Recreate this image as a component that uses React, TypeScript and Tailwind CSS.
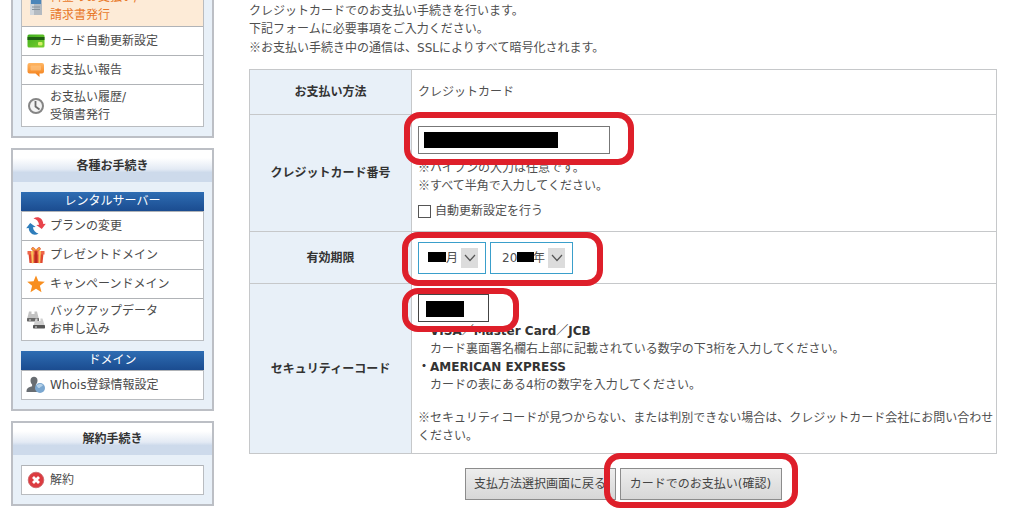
import type { ReactNode } from 'react'

interface MenuItem {
  icon: ReactNode
  lines: string[]
  active?: boolean
}

const ServerIcon = () => (
  <svg viewBox="0 0 18 18" className="h-[18px] w-[18px]">
    <rect x="3" y="0" width="12" height="18" fill="#b3bac1" />
    <rect x="3" y="0" width="4" height="18" fill="#d2d7dc" />
    <rect x="4" y="0" width="10" height="7" fill="#4d86b9" />
    <path d="M5 10h8M5 12.500h8" stroke="#8a939c" strokeWidth="1" />
  </svg>
)

const CardIcon = () => (
  <svg viewBox="0 0 18 18" className="h-[18px] w-[18px]">
    <defs>
      <linearGradient id="card" x1="0" y1="0" x2="1" y2="1">
        <stop offset="0" stopColor="#3fae1f" />
        <stop offset="1" stopColor="#7ad02c" />
      </linearGradient>
    </defs>
    <rect x="0.500" y="2.500" width="17" height="13" rx="1.500" fill="url(#card)" />
    <rect x="0.500" y="5" width="17" height="3" fill="#1e5e12" />
    <rect x="11" y="10" width="4.500" height="3.500" rx="1" fill="#d6f06a" />
  </svg>
)

const BalloonIcon = () => (
  <svg viewBox="0 0 18 18" className="h-[18px] w-[18px]">
    <defs>
      <linearGradient id="balloon" x1="0" y1="0" x2="0" y2="1">
        <stop offset="0" stopColor="#ffb765" />
        <stop offset="1" stopColor="#f27a12" />
      </linearGradient>
    </defs>
    <path d="M2.500 2h12.500a2 2 0 0 1 2 2v6.500a2 2 0 0 1-2 2h-2.500v3.500l-4-3.500h-6a2 2 0 0 1-2-2v-6.500a2 2 0 0 1 2-2z" fill="url(#balloon)" />
    <rect x="3.500" y="4.500" width="10.500" height="5" rx="1" fill="#ffc98b" opacity="0.6" />
  </svg>
)

const ClockIcon = () => (
  <svg viewBox="0 0 18 18" className="h-[18px] w-[18px]">
    <circle cx="9" cy="9" r="7" fill="#f3f3f3" stroke="#858585" strokeWidth="2" />
    <path d="M8.500 4v5.500l4 3" fill="none" stroke="#6b6b6b" strokeWidth="1.800" />
  </svg>
)

const RefreshIcon = () => (
  <svg viewBox="0 0 20 20" className="h-5 w-5">
    <path d="M7.500 2.500C12-.5 17 2.500 17.300 8l2.500-.3-4 5.300-5.500-3.900 2.800-.4C12.700 5.500 10.500 3 7.500 2.500z" fill="#e8444c" />
    <path d="M12.500 17.500C8 20.500 3 17.500 2.700 12l-2.500.3 4-5.300 5.500 3.900-2.800.4c.4 3.200 2.600 5.700 5.600 6.200z" fill="#2e7dbb" />
  </svg>
)

const GiftIcon = () => (
  <svg viewBox="0 0 18 18" className="h-[18px] w-[18px]">
    <path d="M1.500 7.500h15l-1 9.500h-13z" fill="#e04732" />
    <rect x="0.500" y="5" width="17" height="3.500" fill="#ee6549" />
    <path d="M4 5h2.500v12.200H4.800zM11.500 5H14l-.8 12.200h-1.700z" fill="#f9c35a" />
    <rect x="7.700" y="5" width="2.500" height="12" fill="#b92b23" />
    <path d="M9 5C6 5.200 3.500 3.500 5 1.800 6.500.6 8.500 3 9 5zm0 0c3 .2 5.500-1.500 4-3.200C11.500.6 9.500 3 9 5z" fill="#f6a339" stroke="#d9482e" strokeWidth="0.700" />
  </svg>
)

const StarIcon = () => (
  <svg viewBox="0 0 18 18" className="h-[18px] w-[18px]">
    <path d="M9 .5l2.400 5.700 6.400.5-4.900 4.100 1.600 6.400L9 13.800l-5.500 3.400 1.600-6.400L.2 6.700l6.400-.5z" fill="#f88e1e" />
  </svg>
)

const BackupIcon = () => (
  <svg viewBox="0 0 20 20" className="h-5 w-5">
    <path d="M3 1.500h2.500v2.500h3V1.500H11l2 8H1z" fill="#c3c3c3" />
    <rect x="1" y="8" width="12" height="3.500" rx="0.700" fill="#686868" />
    <path d="M9.500 8.500h2v2.500h3V8.500h2l2.300 7.500H7.500z" fill="#d0d0d0" />
    <rect x="7" y="15" width="12" height="3.500" rx="0.700" fill="#555" />
    <path d="M3 10h2M9 17h2" stroke="#ddd" />
  </svg>
)

const UserIcon = () => (
  <svg viewBox="0 0 20 18" className="h-[18px] w-5">
    <path d="M4.500 4.500C4.500 2 6 .8 8 .8s3.500 1.200 3.500 3.700c0 2-.8 3.200-1.600 4v1.700l4.600 2V16H.5c0-3.500.8-4.200 5.600-5.800V8.500c-.8-.8-1.600-2-1.600-4z" fill="#686d72" />
    <circle cx="14" cy="12" r="5" fill="#7ba7d0" />
    <path d="M10.500 9.500c2-2 5-2 6.500-.5-1 2-2 1-3 2.500s-2.500 0-3.500-2z" fill="#b5d1e8" />
  </svg>
)

const CancelIcon = () => (
  <svg viewBox="0 0 18 18" className="h-[18px] w-[18px]">
    <circle cx="9" cy="9" r="7.800" fill="#dc3b40" stroke="#c9666a" strokeWidth="0.800" />
    <path d="M6 6l6 6M12 6l-6 6" stroke="#fff" strokeWidth="2.800" />
  </svg>
)

const paymentItems: MenuItem[] = [
  { icon: <ServerIcon />, lines: ['料金のお支払い/', '請求書発行'], active: true },
  { icon: <CardIcon />, lines: ['カード自動更新設定'] },
  { icon: <BalloonIcon />, lines: ['お支払い報告'] },
  { icon: <ClockIcon />, lines: ['お支払い履歴/', '受領書発行'] },
]

const serverItems: MenuItem[] = [
  { icon: <RefreshIcon />, lines: ['プランの変更'] },
  { icon: <GiftIcon />, lines: ['プレゼントドメイン'] },
  { icon: <StarIcon />, lines: ['キャンペーンドメイン'] },
  { icon: <BackupIcon />, lines: ['バックアップデータ', 'お申し込み'] },
]

const domainItems: MenuItem[] = [{ icon: <UserIcon />, lines: ['Whois登録情報設定'] }]

const cancelItems: MenuItem[] = [{ icon: <CancelIcon />, lines: ['解約'] }]

function Menu({ items }: { items: MenuItem[] }) {
  return (
    <ul className="border-x border-b border-[#b9bcc0] bg-white">
      {items.map((item) => (
        <li key={item.lines[0]} className="border-t border-[#b0b3b7]">
          <a
            href="#"
            className={`flex items-center gap-1 pl-1 ${
              item.active ? 'bg-[#fdebd7] text-[#e8782a]' : 'text-[#4a4a4a]'
            } ${item.lines.length > 1 ? 'h-[41px]' : 'h-7'}`}
          >
            <span className="flex w-5 shrink-0 justify-center">{item.icon}</span>
            <span>
              {item.lines.map((line) => (
                <span key={line} className="block">
                  {line}
                </span>
              ))}
            </span>
          </a>
        </li>
      ))}
    </ul>
  )
}

function Panel({ title, children }: { title: string; children: ReactNode }) {
  return (
    <section className="border-2 border-[#bcbfc5] bg-[#e8f0f8]">
      <h2 className="flex h-8 items-center justify-center bg-linear-to-b from-white from-25% via-[#e3eaf4] via-60% to-[#cddaeb] to-70% font-bold text-[#333]">
        {title}
      </h2>
      <div className="flex flex-col gap-2.5 px-2 pt-2.5 pb-[9px]">{children}</div>
    </section>
  )
}

function Group({ title, items }: { title: string; items: MenuItem[] }) {
  return (
    <div>
      <h3 className="h-[19px] bg-linear-to-b from-[#2e6db3] to-[#1b4c90] text-center text-white">{title}</h3>
      <Menu items={items} />
    </div>
  )
}

// Red frame drawn round the controls that the reader has to fill in
function Callout({ className }: { className: string }) {
  return <span className={`pointer-events-none absolute z-10 rounded-2xl border-[6px] border-[#de1f2a] ${className}`} />
}

function Mask({ className }: { className: string }) {
  return <span className={`pointer-events-none absolute bg-black ${className}`} />
}

// Set in the Japanese face so that the leading ※ takes a full-width cell
function Note({ children }: { children: ReactNode }) {
  return <p className="font-['Noto_Sans_CJK_JP',sans-serif]">{children}</p>
}

function SelectArrow() {
  return (
    <span className="pointer-events-none absolute inset-y-1.5 right-2 flex w-[17px] items-center justify-center bg-[#dcdcdc]">
      <svg viewBox="0 0 12 8" className="h-2 w-3">
        <path d="M1 1l5 5.500 5-5.500" fill="none" stroke="#555" strokeWidth="1.200" />
      </svg>
    </span>
  )
}

function Row({ label, htmlFor, height, children }: { label: string; htmlFor?: string; height: string; children: ReactNode }) {
  return (
    <tr className={height}>
      <th scope="row" className="border border-[#c6c8ca] bg-[#e8f0f8] font-bold text-[#333]">
        {htmlFor ? <label htmlFor={htmlFor}>{label}</label> : label}
      </th>
      <td className="border border-[#c6c8ca] pr-0.5 pl-1.5 align-middle">{children}</td>
    </tr>
  )
}

export default function App() {
  return (
    <div
      lang="ja"
      className="flex h-screen items-start gap-[35px] overflow-hidden bg-white pr-[27px] pl-[11px] font-['DejaVu_Sans','Noto_Sans_CJK_JP',sans-serif] text-xs leading-[18px] text-[#4f4f4f]"
    >
      <aside className="-mt-[60px] flex w-[203px] shrink-0 flex-col gap-2.5">
        <Panel title="お支払い">
          <Menu items={paymentItems} />
        </Panel>
        <Panel title="各種お手続き">
          <Group title="レンタルサーバー" items={serverItems} />
          <Group title="ドメイン" items={domainItems} />
        </Panel>
        <Panel title="解約手続き">
          <Menu items={cancelItems} />
        </Panel>
      </aside>

      <main className="min-w-0 flex-1 pt-0.5">
        <p>クレジットカードでのお支払い手続きを行います。</p>
        <p>下記フォームに必要事項をご入力ください。</p>
        <Note>
          ※お支払い手続き中の通信は、<span className="font-['DejaVu_Sans',sans-serif]">SSL</span>によりすべて暗号化されます。
        </Note>

        <form onSubmit={(e) => e.preventDefault()}>
          <table className="mt-3 w-full table-fixed border-collapse border border-[#c6c8ca]">
            <colgroup>
              <col className="w-[162px]" />
              <col />
            </colgroup>
            <tbody>
              <Row label="お支払い方法" height="h-[45px]">
                クレジットカード
              </Row>
              <Row label="クレジットカード番号" htmlFor="card-number" height="h-[117px]">
                <div className="relative w-48">
                  <input id="card-number" type="text" className="block h-7 w-full border border-[#777] bg-white px-1.5" />
                  <Mask className="top-1.5 left-1.5 h-4 w-[134px]" />
                  <Callout className="-top-3.5 -right-6 -bottom-[11px] -left-3.5" />
                </div>
                <div className="mt-1">
                  <Note>※ハイフンの入力は任意です。</Note>
                  <Note>※すべて半角で入力してください。</Note>
                </div>
                <label className="mt-2 flex items-center gap-1">
                  <input type="checkbox" className="h-[13px] w-[13px] appearance-none border border-[#555] bg-white checked:bg-[#555]" />
                  自動更新設定を行う
                </label>
              </Row>
              <Row label="有効期限" htmlFor="expiry-month" height="h-[52px]">
                <div className="relative flex w-fit gap-1">
                  <div className="relative w-17">
                    <select id="expiry-month" className="block h-8 w-full appearance-none border border-[#3a9fcb] bg-white pl-[27px]">
                      <option>月</option>
                    </select>
                    <Mask className="top-2.5 left-2.5 h-2.5 w-[18px]" />
                    <SelectArrow />
                  </div>
                  <div className="relative w-[83px]">
                    <select aria-label="年" className="block h-8 w-full appearance-none border border-[#3a9fcb] bg-white pl-[11px]">
                      <option>{'20\u2003\u00a0年'}</option>
                    </select>
                    <Mask className="top-2.5 left-[27px] h-2.5 w-[17px]" />
                    <SelectArrow />
                  </div>
                  <Callout className="-top-2.5 -right-[30px] -bottom-3 -left-4" />
                </div>
              </Row>
              <Row label="セキュリティーコード" htmlFor="security-code" height="h-[170px]">
                <div className="relative w-[71px]">
                  <input id="security-code" type="text" className="block h-7 w-full border border-[#444] bg-white px-1.5" />
                  <Mask className="top-[7px] left-2 h-4 w-[38px]" />
                  <Callout className="-top-1.5 -right-[30px] -bottom-2.5 -left-4" />
                </div>
                <dl>
                  <dt className="font-bold text-[#333]">・VISA／Master Card／JCB</dt>
                  <dd className="pl-3">カード裏面署名欄右上部に記載されている数字の下3桁を入力してください。</dd>
                  <dt className="font-bold text-[#333]">・AMERICAN EXPRESS</dt>
                  <dd className="pl-3">カードの表にある4桁の数字を入力してください。</dd>
                </dl>
                <div className="mt-3.5">
                  <Note>※セキュリティコードが見つからない、または判別できない場合は、クレジットカード会社にお問い合わせください。</Note>
                </div>
              </Row>
            </tbody>
          </table>

          <div className="mt-3.5 flex justify-center gap-1">
            <button type="button" className="h-8 w-[151px] border border-[#8c8c8c] bg-linear-to-b from-[#ededed] to-[#d7d7d7] text-[#444]">
              支払方法選択画面に戻る
            </button>
            <div className="relative">
              <button type="submit" className="h-8 w-[162px] border border-[#8c8c8c] bg-linear-to-b from-[#ededed] to-[#d7d7d7] text-[#444]">
                カードでのお支払い(確認)
              </button>
              <Callout className="-inset-x-4 -top-[15px] -bottom-2" />
            </div>
          </div>
        </form>
      </main>
    </div>
  )
}
